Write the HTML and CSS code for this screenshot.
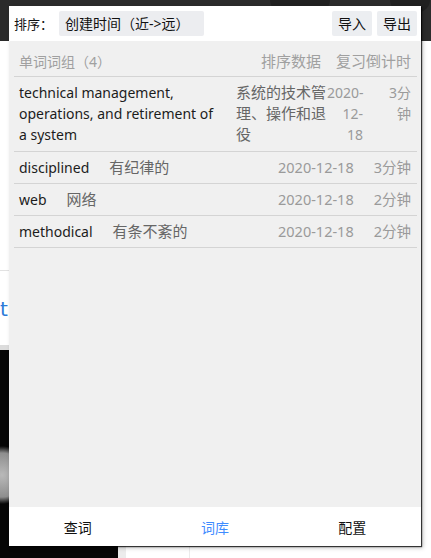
FILE: index.html
```html
<!DOCTYPE html>
<html lang="zh-CN">
<head>
<meta charset="utf-8">
<title>词库</title>
<link rel="stylesheet" href="styles.css">
</head>
<body>
<div class="page">
  <div class="page-top">
    <span class="blob blob-a"></span>
    <span class="blob blob-b"></span>
  </div>
  <div class="page-body">
    <div class="side">
      <div class="side-white">
        <div class="side-line"></div>
        <div class="side-text">t</div>
      </div>
      <div class="side-sep"></div>
      <div class="side-dark"></div>
    </div>
    <div class="gutter"></div>
    <div class="main"><div class="main-rule"></div></div>
  </div>
</div>

<div class="popup">
  <div class="toolbar">
    <span class="label">排序：</span>
    <div class="select">创建时间（近-&gt;远）</div>
    <div class="spacer"></div>
    <button class="btn">导入</button>
    <button class="btn">导出</button>
  </div>

  <div class="content">
    <div class="list">
      <div class="list-head">
        <span class="head-title">单词词组（4）</span>
        <span class="head-col">排序数据</span>
        <span class="head-col head-last">复习倒计时</span>
      </div>
      <div class="item item-long">
        <span class="word">technical management, operations, and retirement of a system</span>
        <span class="meaning">系统的技术管理、操作和退役</span>
        <span class="date">2020-12-18</span>
        <span class="count">3分钟</span>
      </div>
      <div class="item">
        <span class="word">disciplined</span>
        <span class="meaning">有纪律的</span>
        <span class="date">2020-12-18</span>
        <span class="count">3分钟</span>
      </div>
      <div class="item">
        <span class="word">web</span>
        <span class="meaning">网络</span>
        <span class="date">2020-12-18</span>
        <span class="count">2分钟</span>
      </div>
      <div class="item">
        <span class="word">methodical</span>
        <span class="meaning">有条不紊的</span>
        <span class="date">2020-12-18</span>
        <span class="count">2分钟</span>
      </div>
    </div>
  </div>

  <nav class="tabs">
    <span class="tab">查词</span>
    <span class="tab tab-active">词库</span>
    <span class="tab">配置</span>
  </nav>
</div>
</body>
</html>
```

FILE: styles.css
```css
html, body {
  margin: 0;
  padding: 0;
}
body {
  width: 431px;
  height: 558px;
  overflow: hidden;
  position: relative;
  background: #ffffff;
  font-family: "Noto Sans", "Noto Sans CJK SC", sans-serif;
}

/* ---------- page behind the popup ---------- */
.page {
  display: flex;
  flex-direction: column;
  height: 558px;
}
.page-top {
  height: 41px;
  background: #2b2b2b;
  display: flex;
  align-items: flex-start;
}
.blob {
  display: block;
  height: 12px;
  border-radius: 0 0 14px 14px;
  background: #202020;
}
.blob-a {
  width: 60px;
  margin-left: 270px;
}
.blob-b {
  width: 40px;
  margin-left: 60px;
}
.page-body {
  flex: 1;
  display: flex;
}
.side {
  width: 118px;
  display: flex;
  flex-direction: column;
}
.side-white {
  height: 304px;
  background: #ffffff;
  display: flex;
  flex-direction: column;
}
.side-line {
  margin-top: 229px;
  height: 1px;
  background: #e2e2e2;
}
.side-text {
  margin-top: 26px;
  margin-left: 0;
  font-family: "DejaVu Sans", sans-serif;
  font-size: 20px;
  line-height: 24px;
  color: #2a7ad8;
}
.side-sep {
  height: 5px;
  background: #dcdcdc;
}
.side-dark {
  flex: 1;
  background:
    radial-gradient(circle at 2px 125px, #b9b9b9 0, #8e8e8e 22px, #2a2a2a 27px, transparent 29px),
    #060606;
}
.gutter {
  width: 8px;
  background: #ececec;
}
.main {
  flex: 1;
  display: flex;
}
.main-rule {
  margin-left: 63px;
  width: 1px;
  background: #ececec;
}

/* ---------- popup ---------- */
.popup {
  position: absolute;
  left: 9px;
  top: 6px;
  width: 412px;
  height: 540px;
  display: flex;
  flex-direction: column;
  background: #f0f0f0;
  box-shadow: 1px 1px 1px rgba(0, 0, 0, 0.75), 2px 2px 4px rgba(0, 0, 0, 0.25);
}

.toolbar {
  height: 35px;
  background: #ffffff;
  display: flex;
  align-items: center;
  padding: 0 4px 0 5px;
  box-sizing: border-box;
}
.label {
  font-size: 13px;
  color: #111;
  line-height: 20px;
}
.select {
  margin-left: 6px;
  width: 145px;
  height: 25px;
  box-sizing: border-box;
  padding-left: 6px;
  background: #ecedf0;
  border-radius: 2px;
  font-size: 14px;
  line-height: 25px;
  color: #111;
  white-space: nowrap;
}
.spacer {
  flex: 1;
}
.btn {
  margin: 0 0 0 5px;
  width: 40px;
  height: 25px;
  padding: 0;
  border: 0;
  border-radius: 2px;
  background: #eceef1;
  font-family: inherit;
  font-size: 14px;
  line-height: 25px;
  color: #111;
}

.content {
  flex: 1;
}
.list {
  margin: 0 4px 0 5px;
}
.list-head {
  display: flex;
  align-items: center;
  padding: 10px 6px 4px 5px;
  line-height: 21px;
  border-bottom: 1px solid #d4d4d4;
  color: #a0a0a0;
}
.head-title {
  flex: 1;
  font-size: 14px;
}
.head-col {
  font-size: 15px;
}
.head-last {
  margin-left: 15px;
}

.item {
  display: flex;
  align-items: flex-start;
  padding: 5px 6px 5px 5px;
  line-height: 21px;
  border-bottom: 1px solid #d4d4d4;
  font-size: 14px;
}
.word {
  color: #1c1c1c;
}
.meaning {
  margin-left: 20px;
  color: #666;
  font-size: 15px;
}
.date {
  margin-left: auto;
  color: #9a9a9a;
  text-align: right;
  font-size: 14.5px;
}
.count {
  margin-left: 20px;
  color: #9a9a9a;
  text-align: right;
  font-size: 14.5px;
}

/* a row whose phrase is too long for one line: columns wrap */
.item-long {
  padding-bottom: 6px;
}
.item-long .word {
  flex: 1;
  min-width: 0;
}
.item-long .meaning {
  flex: none;
  width: 91px;
  margin-left: 16px;
}
.item-long .date {
  flex: none;
  width: 36px;
  margin-left: 0;
  font-size: 14px;
}
.item-long .count {
  flex: none;
  width: 28px;
  font-size: 14px;
}

.tabs {
  height: 39px;
  background: #ffffff;
  display: flex;
  align-items: center;
}
.tab {
  flex: 1;
  text-align: center;
  font-size: 14px;
  color: #111;
}
.tab-active {
  color: #3f8cff;
}
```
